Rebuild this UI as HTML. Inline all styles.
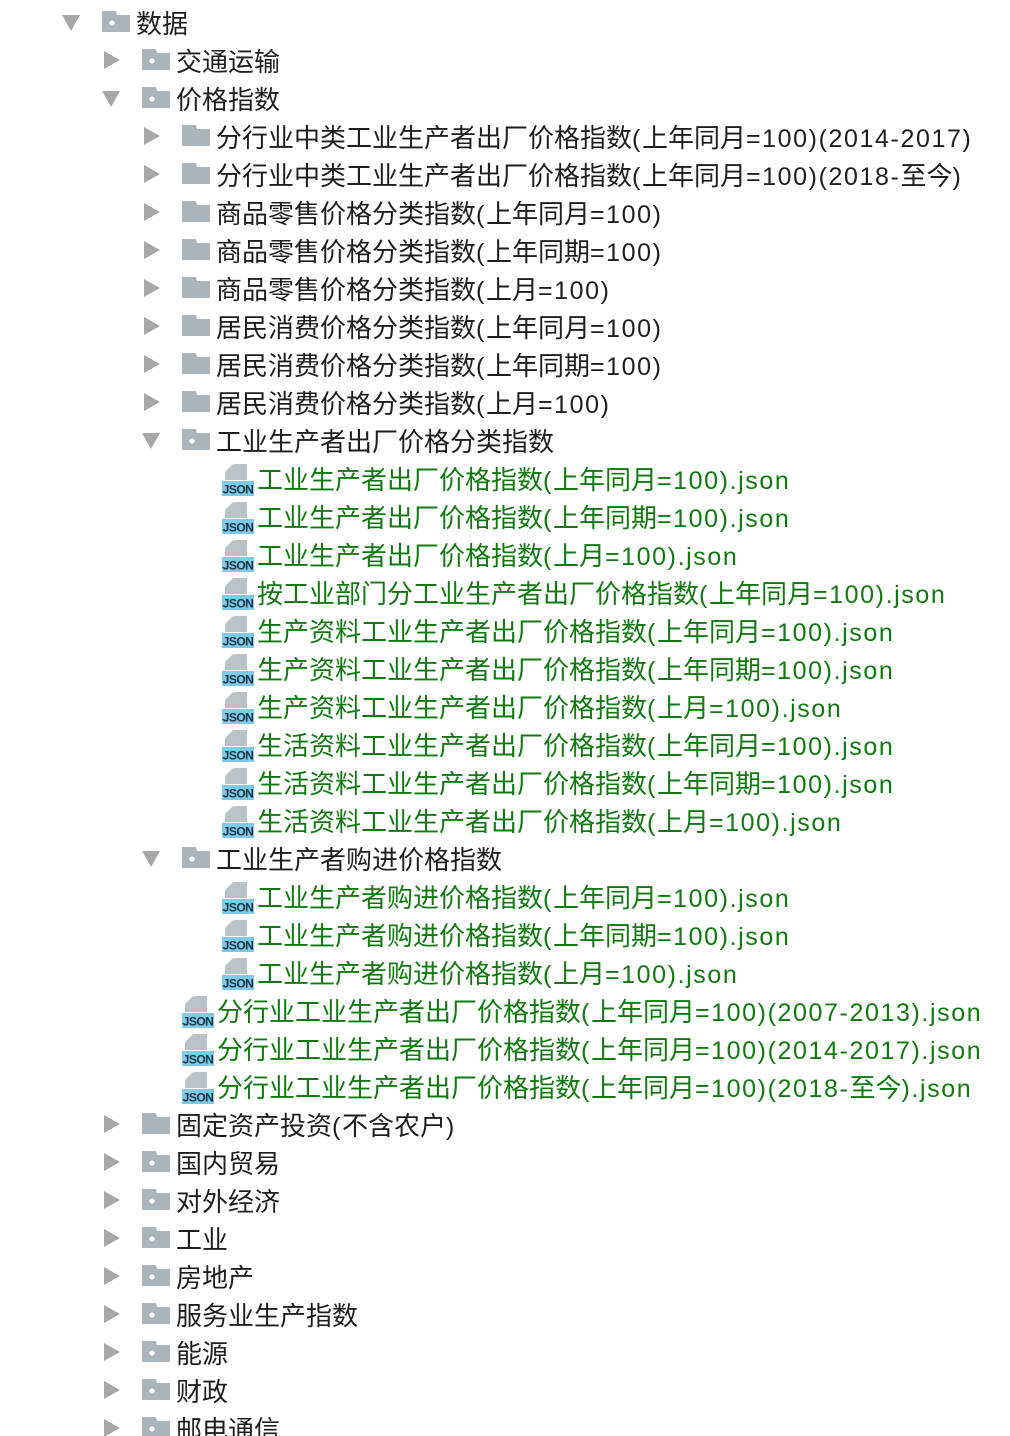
<!DOCTYPE html>
<html><head><meta charset="utf-8"><style>
html,body{margin:0;padding:0;background:#fff;width:1010px;height:1436px;overflow:hidden;position:relative}
.r{position:absolute;height:38px;line-height:38px;font-family:"Liberation Sans","Noto Sans CJK SC",sans-serif;font-size:26px;color:#1e1e1e;white-space:nowrap}
.r span{letter-spacing:1.6px;font-size:25px}
.g{color:#107a10}
.t{position:absolute;top:10px;width:0;height:0}
.tr{border-left:16px solid #a7a7a7;border-top:9px solid transparent;border-bottom:9px solid transparent}
.td{border-top:16px solid #a7a7a7;border-left:9px solid transparent;border-right:9px solid transparent}
svg{position:absolute}
</style></head><body>
<svg width="0" height="0" style="position:absolute"><defs>
<symbol id="fo" viewBox="0 0 28 21"><path d="M0 0H14L15 4H28V21H0Z" fill="#aab4bb"/><circle cx="10" cy="12" r="2.6" fill="#fff"/></symbol>
<symbol id="fc" viewBox="0 0 28 21"><path d="M0 0H14L15 4H28V21H0Z" fill="#aab4bb"/></symbol>
<symbol id="js" viewBox="0 0 32 32"><path d="M12 0H25V16H3V9Z" fill="#bcc3c8"/><path d="M3 8L11 0V8Z" fill="#bcc3c8"/><rect x="0" y="17" width="32" height="15" fill="#7ecbe6"/><text x="16" y="29.5" text-anchor="middle" font-family="Liberation Sans,sans-serif" font-size="12" font-weight="bold" fill="#163246" letter-spacing="-0.5">JSON</text></symbol>
</defs></svg>
<div id="c"></div>
<script>
var rows=[
[0,'d','fo','数据'],[1,'r','fo','交通运输'],[1,'d','fo','价格指数'],
[2,'r','fc','分行业中类工业生产者出厂价格指数(上年同月=100)(2014-2017)'],
[2,'r','fc','分行业中类工业生产者出厂价格指数(上年同月=100)(2018-至今)'],
[2,'r','fc','商品零售价格分类指数(上年同月=100)'],
[2,'r','fc','商品零售价格分类指数(上年同期=100)'],
[2,'r','fc','商品零售价格分类指数(上月=100)'],
[2,'r','fc','居民消费价格分类指数(上年同月=100)'],
[2,'r','fc','居民消费价格分类指数(上年同期=100)'],
[2,'r','fc','居民消费价格分类指数(上月=100)'],
[2,'d','fo','工业生产者出厂价格分类指数'],
[3,'','js','工业生产者出厂价格指数(上年同月=100).json'],
[3,'','js','工业生产者出厂价格指数(上年同期=100).json'],
[3,'','js','工业生产者出厂价格指数(上月=100).json'],
[3,'','js','按工业部门分工业生产者出厂价格指数(上年同月=100).json'],
[3,'','js','生产资料工业生产者出厂价格指数(上年同月=100).json'],
[3,'','js','生产资料工业生产者出厂价格指数(上年同期=100).json'],
[3,'','js','生产资料工业生产者出厂价格指数(上月=100).json'],
[3,'','js','生活资料工业生产者出厂价格指数(上年同月=100).json'],
[3,'','js','生活资料工业生产者出厂价格指数(上年同期=100).json'],
[3,'','js','生活资料工业生产者出厂价格指数(上月=100).json'],
[2,'d','fo','工业生产者购进价格指数'],
[3,'','js','工业生产者购进价格指数(上年同月=100).json'],
[3,'','js','工业生产者购进价格指数(上年同期=100).json'],
[3,'','js','工业生产者购进价格指数(上月=100).json'],
[2,'','js','分行业工业生产者出厂价格指数(上年同月=100)(2007-2013).json'],
[2,'','js','分行业工业生产者出厂价格指数(上年同月=100)(2014-2017).json'],
[2,'','js','分行业工业生产者出厂价格指数(上年同月=100)(2018-至今).json'],
[1,'r','fc','固定资产投资(不含农户)'],[1,'r','fo','国内贸易'],[1,'r','fo','对外经济'],[1,'r','fo','工业'],
[1,'r','fo','房地产'],[1,'r','fo','服务业生产指数'],[1,'r','fo','能源'],[1,'r','fo','财政'],[1,'r','fo','邮电通信']];
var h='';
rows.forEach(function(r,i){
 var top=3+i*38, x=62+r[0]*40;
 var txt=r[3].replace(/[\x20-\x7e]+/g,function(m){return '<span>'+m+'</span>';});
 if(r[1]=='r') h+='<div class="t tr" style="left:'+(x+2)+'px;top:'+(top+10)+'px"></div>';
 if(r[1]=='d') h+='<div class="t td" style="left:'+(x)+'px;top:'+(top+12)+'px"></div>';
 if(r[2]=='js') h+='<svg width="32" height="32" style="left:'+(x+40)+'px;top:'+(top+5)+'px"><use href="#js"/></svg><div class="r g" style="left:'+(x+75)+'px;top:'+(top+2)+'px">'+txt+'</div>';
 else h+='<svg width="28" height="21" style="left:'+(x+40)+'px;top:'+(top+8)+'px"><use href="#'+r[2]+'"/></svg><div class="r" style="left:'+(x+74)+'px;top:'+(top+2)+'px">'+txt+'</div>';
});
document.getElementById('c').innerHTML=h;
</script>
</body></html>
